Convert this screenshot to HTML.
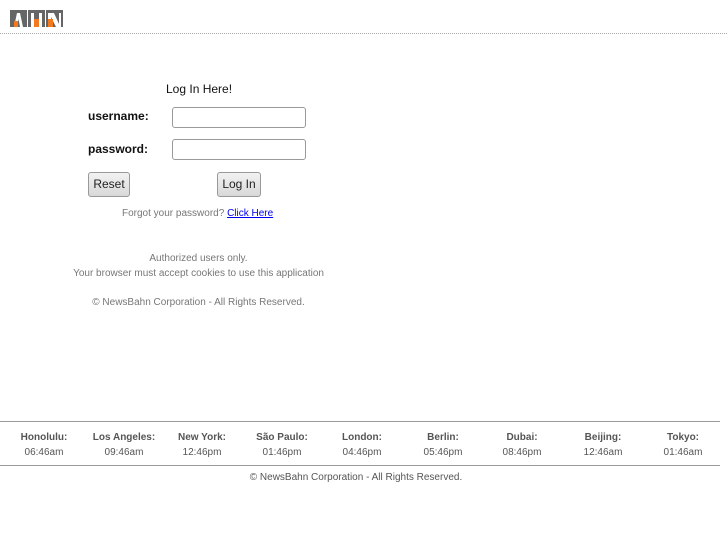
<!DOCTYPE html>
<html><head><style>
body{margin:0;width:727px;height:545px;background:#fff;font-family:"Liberation Sans",sans-serif;position:relative;overflow:hidden}
.a{position:absolute;white-space:nowrap}
.g{color:#777;font-size:10px}
input{position:absolute;margin:0;padding:0;box-sizing:border-box;height:21px;width:134px;border:1px solid #999;border-radius:3px}
.btn{position:absolute;height:25px;background:linear-gradient(#f2f2f2,#d8d8d8);border:1px solid #999;border-radius:3px;font-size:12px;box-sizing:border-box;text-align:center;line-height:23px;color:#222}
.tz{position:absolute;top:430px;width:80px;text-align:center;font-size:10px;color:#555;line-height:15px}
</style></head><body>
<svg class="a" style="left:10px;top:10px" width="53" height="18" viewBox="0 0 53 18">
<rect x="0" y="0" width="17" height="17" fill="#666"/>
<path d="M4 17 L7 3 L10 3 L13 17 L10 17 L8.5 9 L7 17Z" fill="#fff"/>
<rect x="4" y="11" width="4" height="6" fill="#f47a20"/>
<rect x="18" y="0" width="17" height="17" fill="#666"/>
<rect x="21" y="3" width="3" height="14" fill="#fff"/>
<rect x="29" y="3" width="3" height="14" fill="#fff"/>
<rect x="24" y="9" width="5" height="8" fill="#f47a20"/>
<rect x="36" y="0" width="17" height="17" fill="#666"/>
<rect x="38" y="3" width="3" height="14" fill="#fff"/>
<path d="M41 3 L44 3 L49 14 L49 17 L46 17 L41 7Z" fill="#fff"/>
<rect x="38" y="9" width="5" height="8" fill="#f47a20"/>
<rect x="49" y="3" width="2" height="14" fill="#fff"/>
</svg>
<div class="a" style="left:0;top:33px;width:727px;border-top:1px dotted #aaa"></div>
<div class="a" style="left:166px;top:82px;font-size:12px;color:#111">Log In Here!</div>
<div class="a" style="left:88px;top:109px;font-size:12px;font-weight:bold;color:#111">username:</div>
<div class="a" style="left:88px;top:142px;font-size:12px;font-weight:bold;color:#111">password:</div>
<input style="left:172px;top:107px">
<input style="left:172px;top:139px">
<div class="btn" style="left:88px;top:172px;width:42px">Reset</div>
<div class="btn" style="left:217px;top:172px;width:44px">Log In</div>
<div class="a g" style="left:122px;top:208px">Forgot your password? <span style="color:#00e;text-decoration:underline">Click Here</span></div>
<div class="a g" style="left:0;width:397px;text-align:center;top:253px">Authorized users only.</div>
<div class="a g" style="left:0;width:397px;text-align:center;top:268px">Your browser must accept cookies to use this application</div>
<div class="a g" style="left:0;width:397px;text-align:center;top:297px">© NewsBahn Corporation - All Rights Reserved.</div>
<div class="a" style="left:0;top:421px;width:720px;border-top:1px solid #999"></div>
<div class="tz" style="left:4px"><b>Honolulu:</b><br>06:46am</div>
<div class="tz" style="left:84px"><b>Los Angeles:</b><br>09:46am</div>
<div class="tz" style="left:162px"><b>New York:</b><br>12:46pm</div>
<div class="tz" style="left:242px"><b>São Paulo:</b><br>01:46pm</div>
<div class="tz" style="left:322px"><b>London:</b><br>04:46pm</div>
<div class="tz" style="left:403px"><b>Berlin:</b><br>05:46pm</div>
<div class="tz" style="left:482px"><b>Dubai:</b><br>08:46pm</div>
<div class="tz" style="left:563px"><b>Beijing:</b><br>12:46am</div>
<div class="tz" style="left:643px"><b>Tokyo:</b><br>01:46am</div>
<div class="a" style="left:0;top:465px;width:720px;border-top:1px solid #999"></div>
<div class="a g" style="left:0;width:712px;text-align:center;top:472px;color:#555">© NewsBahn Corporation - All Rights Reserved.</div>
</body></html>
